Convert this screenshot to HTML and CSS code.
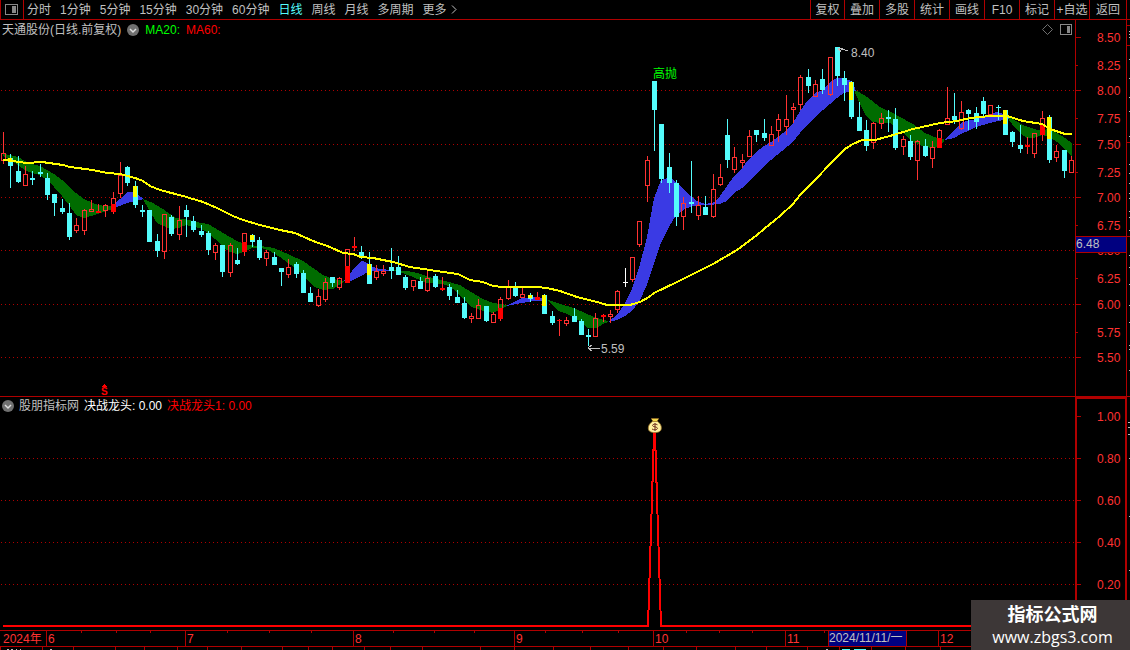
FILE: index.html
```html
<!DOCTYPE html>
<html lang="zh-CN">
<head>
    <meta charset="UTF-8">
    <meta name="viewport" content="width=device-width, initial-scale=1.0">
    <title>天通股份 - 日线</title>
    <link rel="stylesheet" href="styles.css">
</head>
<body>
    <header class="toolbar">
        <button class="layout-button" aria-label="布局">
            <svg width="13" height="11" viewBox="0 0 13 11"><rect x="0.5" y="0.5" width="12" height="10" rx="1" fill="none" stroke="#888"/><rect x="7" y="2" width="4" height="7" fill="#888"/></svg>
        </button>
        <nav class="periods">
            <button>分时</button>
            <button>1分钟</button>
            <button>5分钟</button>
            <button>15分钟</button>
            <button>30分钟</button>
            <button>60分钟</button>
            <button class="active">日线</button>
            <button>周线</button>
            <button>月线</button>
            <button>多周期</button>
            <button class="more">更多
                <svg width="6" height="9" viewBox="0 0 6 9"><path d="M1 0.5L5 4.5L1 8.5" fill="none" stroke="#c0c0c0"/></svg>
            </button>
        </nav>
        <div class="tools">
            <button>复权</button>
            <button>叠加</button>
            <button>多股</button>
            <button>统计</button>
            <button>画线</button>
            <button>F10</button>
            <button>标记</button>
            <button>+自选</button>
            <button>返回</button>
        </div>
    </header>

    <main>
        <section class="panel">
            <div class="plot">
                <div class="panel-title price-title">
                    <span>天通股份(日线.前复权)</span>
                    <button class="toggle" aria-label="展开">
                        <svg width="12" height="12" viewBox="0 0 12 12"><circle cx="6" cy="6" r="6" fill="#707070"/><path d="M3 5L6 8L9 5" fill="none" stroke="#ddd" stroke-width="1.5"/></svg>
                    </button>
                    <span class="ma20">MA20:</span>
                    <span class="ma60">MA60:</span>
                    <span class="title-icons">
                        <svg width="11" height="11" viewBox="0 0 11 11"><path d="M5.5 0.5L10.5 5.5L5.5 10.5L0.5 5.5Z" fill="none" stroke="#707070"/></svg>
                        <svg width="12" height="11" viewBox="0 0 12 11"><rect x="0.5" y="0.5" width="11" height="10" rx="1" fill="none" stroke="#888"/><rect x="7" y="2" width="3" height="7" fill="#888"/></svg>
                    </span>
                </div>
                <svg class="chart" viewBox="0 39 1075 357">
                    <g id="priceGrid"></g>
                    <g class="band-down">
                        <polygon points="3,154 10,155 18,157 25,161 32,164 40,166 47,170 54,174 62,180 69,187 76,193 84,199 91,202 98,205 106,206 115,206 115,208 106,211 98,214 91,216 84,218 76,215 69,205 62,196 54,187 47,180 40,175 32,173 25,170 18,165 10,160 3,156"/>
                        <polygon points="143,199 153,203 163,209 170,214 176,218 183,219 193,221 201,223 208,224 215,228 223,233 230,237 237,241 247,245 260,246 274,248 288,254 303,261 313,268 323,275 333,279 344,281 342,283 333,289 323,290 315,287 307,280 298,270 288,263 280,257 270,251 261,248 252,248 244,252 237,254 230,252 223,247 215,239 208,233 200,228 193,227 186,225 179,228 171,229 157,223 149,210"/>
                        <polygon points="391,270 407,271 417,273 433,278 449,282 460,285 471,292 483,299 493,303 507,305 507,306 500,310 493,313 480,310 471,307 464,300 457,292 449,286 442,284 427,283 413,277 400,272"/>
                        <polygon points="546,299 560,304 574,308 587,314 600,319 608,321 608,322 603,324 597,328 588,328 581,322 574,317 567,314 559,311 552,305"/>
                        <polygon points="854,90 859,92 867,97 880,107 895,114 900,117 913,124 925,133 937,138 944,139 944,141 939,147 932,148 925,147 913,142 903,133 895,127 890,123 881,123 873,122 866,116 859,102"/>
                        <polygon points="1007,117 1013,119 1023,125 1037,130 1042,130 1050,129 1057,133 1065,138 1072,143 1072,156 1063,148 1057,142 1049,137 1042,135 1034,138 1027,138 1020,133 1012,124"/>
                    </g>
                    <g class="band-up">
                        <polygon points="113,205 120,199 127,192 131,192 137,194 144,199 135,201 127,203 120,206 113,208"/>
                        <polygon points="343,281 350,274 355,267 361,261 363,261 367,263 373,267 380,269 391,270 391,271 370,271 361,276 353,280 347,282"/>
                        <polygon points="506,306 522,298 533,297 543,298 548,300 543,301 533,301 522,303"/>
                        <polygon points="608,322 617,315 625,303 632,289 639,268 647,237 654,198 661,180 667,178 672,179 677,183 687,193 697,201 705,204 715,202 720,196 727,186 734,176 742,168 749,159 756,152 764,146 771,142 783,133 793,123 800,111 808,100 815,93 823,90 830,82 837,78 844,78 853,82 856,91 851,91 844,93 837,98 830,104 815,117 800,133 793,142 771,160 753,177 742,188 734,193 727,201 720,204 707,205 693,206 685,209 676,215 669,227 661,243 654,263 647,285 639,302 632,311 625,316 617,320"/>
                        <polygon points="944,140 954,130 963,122 980,118 990,114 997,112 1006,115 1009,119 998,121 990,123 976,127 968,131 961,134 954,138"/>
                    </g>
                    <g id="candles"></g>
                    <polyline class="ma60-line" points="3,160 12,161 27,163 42,162 63,165 70,167 93,170 107,173 120,174 135,178 143,181 150,186 160,190 183,196 203,202 217,208 233,216 243,220 260,225 280,230 295,233 313,241 330,247 343,253 353,254 361,257 373,258 393,262 410,267 430,270 443,272 458,274 470,280 483,282 493,286 503,287 537,287 547,288 560,291 577,297 597,302 607,305 630,305 640,302 649,297 654,293 677,282 703,269 713,264 737,250 757,235 764,229 780,216 793,204 800,195 813,182 833,161 845,149 853,144 862,140 875,140 890,136 913,129 940,123 957,121 970,118 990,116 1007,116 1023,121 1042,124 1050,129 1065,134 1072,134"/>
                    <path class="pointer" d="M838 48L848 51M838 48H843M838 48L841 52"/>
                    <text class="note" x="851" y="57">8.40</text>
                    <path class="pointer" d="M588 348H600M588 348L592 345M588 348L592 351"/>
                    <text class="note" x="601" y="353">5.59</text>
                    <text class="signal" x="653" y="78">高抛</text>
                    <path d="M101 387L104.500 384L108 387Z" fill="#f00"/>
                    <text class="dollar" x="101" y="395">S</text>
                </svg>
            </div>
            <svg class="axis" viewBox="1075 20 55 376">
                <path class="axis-line" d="M1075.500 20V396M1126.500 20V396"/>
                <g id="priceAxis"></g>
                <rect x="1076" y="236" width="50" height="16" fill="#000080"/>
                <path class="axis-line" d="M1076 236.500H1130M1076 252.500H1126M1127 25.500H1130M1127 45.500H1130M1127 142.500H1130"/>
                <text class="cursor-value" x="1076" y="248">6.48</text>
                <g id="edgeMarks"></g>
            </svg>
        </section>

        <section class="panel">
            <div class="plot">
                <div class="panel-title signal-title">
                    <button class="toggle" aria-label="展开">
                        <svg width="12" height="12" viewBox="0 0 12 12"><circle cx="6" cy="6" r="6" fill="#707070"/><path d="M3 5L6 8L9 5" fill="none" stroke="#ddd" stroke-width="1.5"/></svg>
                    </button>
                    <span>股朋指标网</span>
                    <span class="value-white">决战龙头: 0.00</span>
                    <span class="value-red">决战龙头1: 0.00</span>
                </div>
                <svg class="chart" viewBox="0 415 1075 215">
                    <g id="signalGrid"></g>
                    <polyline class="spike" points="3,626 648,626 654.500,418 661,626 1075,626"/>
                    <!-- money bag -->
                    <path d="M651 418H659L657 422H653Z" fill="#f4d84c" stroke="#70501c" stroke-width="0.800"/>
                    <path class="bag" d="M652.500 421.500H657.500C660 423 661.500 425.500 661.300 428C661.300 431.500 658.500 432.600 655 432.600C651 432.600 648.300 431.500 648.300 428C648.300 425.500 650 423 652.500 421.500Z" fill="#fff0a0" stroke="#a07828" stroke-width="0.800"/>
                    <path class="bag" d="M657.500 424.800C656 423.700 652.500 423.900 652.500 425.500C652.500 427.300 657.500 426.300 657.500 428.400C657.500 430 653.500 430.200 652 429M655 423V431" fill="none" stroke="#703020"/>
                </svg>
            </div>
            <svg class="axis" viewBox="1075 397 55 233">
                <path class="axis-line thick" d="M1076 398H1126V630M1076 397V630"/>
                <g id="signalAxis"></g>
                <path d="M1128 422.500H1130M1128 427.500H1130M1128 434.500H1130M1129 458.500H1130M1129 516.500H1130M1129 570.500H1130" stroke="#bbb"/>
            </svg>
        </section>

        <svg class="time-axis" viewBox="0 630 1130 20">
            <path class="axis-line" d="M0 630.500H1130M0 646.500H1130"/>
            <rect x="829" y="631" width="77" height="15" fill="#000080"/>
            <path class="axis-line" d="M828.500 631V646M906.500 631V646"/>
            <g id="timeAxis"></g>
            <text class="cursor-value" x="829" y="642">2024/11/11/一</text>
            <path d="M7 649.500H9M11 649.500H13M16 649.500H17M20 649.500H21M50 649.500H52M826 649.500H828" stroke="#bbb"/>
            <path d="M842 649.500H850M854 649.500H866" stroke="#54fcfc"/>
        </svg>
    </main>

    <aside class="watermark">
        <strong>指标公式网</strong>
        <span>www.zbgs3.com</span>
    </aside>

    <script src="chart.js"></script>
</body>
</html>
```

FILE: styles.css
```css
:root {
    --bg: #000;
    --line: #b00000;
    --text: #c0c0c0;
    --red: #ff3232;
    --cyan: #54fcfc;
    --up: #3a3ae4;
    --down: #006c00;
}

* {
    box-sizing: border-box;
}
body {
    margin: 0;
    background-color: var(--bg);
    color: var(--text);
    font-family: "Liberation Sans", "Noto Sans CJK SC", sans-serif;
    font-size: 12px;
    line-height: 18px;
    overflow: hidden;
}
button {
    padding: 0;
    border: none;
    background: none;
    color: inherit;
    font: inherit;
    white-space: nowrap;
    cursor: pointer;
}
svg {
    display: block;
}

/* toolbar */
.toolbar {
    display: flex;
    height: 20px;
    padding-right: 3px;
    border-bottom: 1px solid var(--line);
}
.layout-button {
    width: 24px;
    padding-left: 4px;
    border-left: 1px solid var(--line);
    border-right: 1px solid var(--line);
}
.periods {
    display: flex;
    flex: 1;
    gap: 9px;
    padding-left: 3px;
}
.periods .active {
    color: var(--cyan);
}
.more {
    display: flex;
    align-items: center;
    gap: 4px;
}
.tools {
    display: flex;
    border-right: 1px solid var(--line);
}
.tools button {
    width: 35px;
    border-left: 1px solid var(--line);
}
.tools button:first-child {
    width: 34px;
}
.tools button:last-child {
    width: 37px;
}

/* chart panels */
.panel {
    display: grid;
    grid-template-columns: 1075fr 55fr;
}
.panel:first-child {
    border-bottom: 1px solid var(--line);
}
.plot {
    min-width: 0;
}
.chart, .axis, .time-axis {
    width: 100%;
    height: auto;
}
.panel-title {
    display: flex;
    align-items: center;
    gap: 5px;
    padding-left: 2px;
}
.price-title {
    gap: 6px;
    height: 19px;
}
.signal-title {
    height: 18px;
}
.toggle {
    width: 12px;
    height: 12px;
}
.ma20 {
    color: #00ff00;
}
.ma60 {
    color: #ff0000;
}
.title-icons {
    display: flex;
    gap: 7px;
    margin-left: auto;
    padding-right: 3px;
}
.value-white {
    color: #fff;
}
.value-red {
    color: #ff0000;
}

/* drawing */
svg path, svg polygon, svg rect, svg line, .chart polyline {
    shape-rendering: crispEdges;
}
button path, button circle, .title-icons path, svg .bag {
    shape-rendering: auto;
}
svg text {
    font-size: 12px;
}
.grid-line {
    stroke: #b00000;
    stroke-dasharray: 1 3;
}
.axis-line {
    fill: none;
    stroke: var(--line);
}
.thick {
    stroke-width: 2;
}
.axis-text {
    fill: var(--red);
}
.cursor-value, .note {
    fill: var(--text);
}
.band-down {
    fill: var(--down);
}
.band-up {
    fill: var(--up);
}
.ma60-line {
    fill: none;
    stroke: #ffff00;
    stroke-width: 2;
}
.pointer {
    fill: none;
    stroke: var(--text);
}
.signal {
    fill: #00ff00;
}
.dollar {
    fill: #ff0000;
    font-weight: bold;
    font-size: 10px;
}
.spike {
    fill: none;
    stroke: #ff0000;
    stroke-width: 2;
}
.candle-up {
    fill: none;
    stroke: var(--red);
}
.candle-down {
    fill: var(--cyan);
    stroke: none;
}
.wick-up {
    stroke: var(--red);
}
.wick-down {
    stroke: var(--cyan);
}
.wick-flat {
    stroke: #fff;
}
.candle-flat {
    fill: #fff;
}
.candle-red {
    fill: #ff0000;
}
.candle-yellow {
    fill: #ffff00;
}

.watermark {
    position: absolute;
    right: 0;
    bottom: 0;
    display: flex;
    flex-direction: column;
    align-items: center;
    width: 159px;
    height: 50px;
    padding: 1px 0 0 4px;
    background-color: #3d3737;
    color: #fff;
    font-family: "Open Sans", "Noto Sans CJK SC", sans-serif;
    font-size: 16px;
    line-height: 22px;
}
.watermark strong {
    font-family: "Noto Sans CJK SC", sans-serif;
    font-size: 18px;
    line-height: 25px;
}
```

FILE: chart.js
```js
// kind, high, body top, body bottom, low, highlight top, highlight bottom
// u = up, d = down, s = small solid up, f = flat
const candles = [
    ['u',132,153,161,164], ['d',154,158,166,188,158,162], ['d',156,171,182,183], ['u',166,174,186,186],
    ['d',171,178,180,185], ['d',164,172,174,177], ['d',173,178,195,200], ['d',194,194,203,216],
    ['d',199,208,212,214], ['d',203,213,237,240], ['u',218,225,231,233], ['u',209,210,231,235],
    ['u',200,209,212,212], ['s',204,211,213,213], ['u',204,205,211,217], ['u',192,198,212,214,204,212],
    ['u',162,175,194,198], ['d',166,167,183,186], ['d',181,186,205,208,186,197], ['d',205,210,212,217],
    ['d',210,210,242,242], ['d',234,241,251,257], ['u',214,214,252,259], ['d',215,217,234,236],
    ['u',206,220,235,240], ['d',205,210,217,237], ['d',216,221,230,232], ['d',225,231,235,237],
    ['d',231,233,250,255], ['u',243,245,253,260], ['d',245,245,272,277], ['u',243,245,273,277],
    ['d',248,260,264,265], ['u',233,233,252,256,242,252], ['d',234,235,242,247,235,240], ['d',237,240,258,260],
    ['u',250,252,259,266], ['d',252,257,265,265], ['d',268,268,272,286], ['u',259,267,275,278],
    ['d',262,264,274,278], ['d',270,273,293,293], ['d',287,293,302,302], ['u',289,296,306,307],
    ['u',278,282,300,302], ['d',277,277,283,287], ['u',277,278,288,290], ['u',249,249,283,283,266,283],
    ['s',237,246,248,251], ['d',246,252,257,259], ['d',252,264,284,284,264,275], ['u',265,271,278,280],
    ['u',265,271,274,276], ['d',248,267,271,279], ['d',256,267,275,275], ['d',275,277,288,290],
    ['u',280,280,287,291], ['d',277,281,289,289], ['u',270,278,291,292], ['d',274,276,287,288],
    ['s',277,288,290,291], ['d',284,287,296,300], ['d',290,297,303,303], ['d',297,303,318,319],
    ['u',313,316,319,323], ['u',299,305,319,319], ['d',306,306,321,322], ['u',312,314,323,323],
    ['u',297,299,319,321,308,319], ['u',280,287,299,300], ['d',282,287,296,297], ['u',288,294,298,298],
    ['d',293,295,299,302,295,298], ['s',292,297,300,300], ['d',294,295,314,314,295,306], ['d',311,316,323,325],
    ['s',319,320,321,336], ['u',317,320,324,326], ['d',308,316,322,322], ['d',319,321,335,335],
    ['d',329,335,337,346], ['u',313,318,337,337], ['s',314,315,317,322], ['u',310,314,317,323],
    ['u',290,291,310,313], ['f',268,282,283,287], ['u',257,257,280,282], ['u',221,221,245,247],
    ['u',156,160,186,202], ['d',81,81,110,151], ['d',124,124,179,183], ['d',153,167,183,193],
    ['d',180,183,217,226], ['u',197,203,217,230], ['d',161,202,204,213], ['u',196,205,216,220],
    ['d',196,207,215,215], ['u',174,189,217,218], ['u',164,177,185,186], ['d',119,135,160,168],
    ['u',147,157,170,173], ['u',154,160,163,168], ['u',130,136,157,157], ['d',130,130,135,142],
    ['d',119,133,138,141], ['u',126,134,146,146], ['u',114,119,131,142], ['u',95,119,127,135],
    ['u',103,107,110,123], ['u',75,77,105,110], ['d',69,77,86,93], ['u',80,84,97,97],
    ['d',69,79,90,94], ['u',57,57,95,96], ['d',47,47,76,86], ['d',71,78,85,101],
    ['d',81,82,117,119,82,100], ['d',102,117,131,131], ['d',120,130,146,151], ['u',122,123,143,149],
    ['u',113,118,124,129], ['d',110,117,119,132], ['d',108,119,148,150], ['u',136,139,147,155],
    ['d',135,141,157,160], ['u',140,141,161,180], ['d',139,146,156,157], ['u',141,147,159,168],
    ['u',129,130,148,148,138,148], ['u',87,118,125,125], ['d',93,116,120,124], ['u',101,112,129,130],
    ['d',109,110,114,130], ['d',107,113,122,129], ['d',97,101,114,116], ['u',105,105,115,116],
    ['d',105,107,108,120], ['d',110,110,135,135,110,124], ['d',131,132,142,147], ['d',125,145,149,153],
    ['s',137,145,147,154], ['u',133,133,154,158], ['u',111,118,135,141,125,135], ['d',115,117,160,163,117,139],
    ['u',145,151,158,162], ['d',150,150,171,178], ['u',156,160,173,173]
];

const line = (cls, x1, y1, x2, y2) =>
    `<line class="${cls}" x1="${x1}" y1="${y1}" x2="${x2}" y2="${y2}"/>`;
const label = (x, y, text) => `<text class="axis-text" x="${x}" y="${y}">${text}</text>`;

function fill(id, html) {
    document.getElementById(id).innerHTML = html;
}

function drawCandle([kind, high, top, bottom, low, markTop, markBottom], i) {
    const x = Math.floor(3.55 + i * 7.314);
    const name = { u: 'up', s: 'up', d: 'down', f: 'flat' }[kind];
    let out = '';
    if (high < top) out += line('wick-' + name, x + 0.5, high, x + 0.5, top);
    if (low > bottom) out += line('wick-' + name, x + 0.5, bottom, x + 0.5, low);
    if (kind === 'u') {
        out += `<rect class="candle-up" x="${x - 1.5}" y="${top + 0.5}" width="4" height="${bottom - top - 1}"/>`;
    } else {
        const cls = kind === 's' ? 'candle-red' : 'candle-' + name;
        out += `<rect class="${cls}" x="${x - 2}" y="${top}" width="5" height="${bottom - top}"/>`;
    }
    if (markTop) {
        const cls = kind === 'u' ? 'candle-red' : 'candle-yellow';
        // yellow marks leave the last column of the body uncovered
        const w = kind === 'u' ? 5 : 4;
        out += `<rect class="${cls}" x="${x - 2}" y="${markTop}" width="${w}" height="${markBottom - markTop}"/>`;
    }
    return out;
}

fill('candles', candles.map(drawCandle).join(''));
fill('priceGrid', [90, 144, 197, 250, 304, 357].map(y => line('grid-line', 1, y + 0.5, 1075, y + 0.5)).join(''));
fill('signalGrid', [458, 500, 542, 584].map(y => line('grid-line', 1, y + 0.5, 1075, y + 0.5)).join(''));

const prices = [
    [37, '8.50'], [65, '8.25'], [90, '8.00'], [118, '7.75'], [144, '7.50'], [172, '7.25'], [197, '7.00'],
    [225, '6.75'], [250, '6.50'], [278, '6.25'], [304, '6.00'], [332, '5.75'], [357, '5.50']
];
fill('priceAxis', prices.map(([y, text], i) =>
    line('axis-line', 1076, y + 0.5, i % 2 ? 1078 : 1081, y + 0.5) + label(1097, y + 5, text)).join(''));

const levels = [[416, '1.00'], [458, '0.80'], [500, '0.60'], [542, '0.40'], [584, '0.20']];
fill('signalAxis', levels.map(([y, text]) =>
    line('axis-line', 1077, y + 0.5, 1081, y + 0.5) + label(1097, y + 5, text)).join(''));

const marks = [31, 34, 37, 59, 78, 97, 111, 136, 164, 173, 183, 193, 198, 211, 217, 230, 255, 267, 284, 305, 322, 345, 349, 370];
fill('edgeMarks', marks.map(y => `<rect x="1129" y="${y}" width="1" height="1" fill="#bbb"/>`).join(''));

const months = [[46, 6], [185, 7], [353, 8], [514, 9], [653, 10], [785, 11], [938, 12]];
const weeks = [81, 116, 150, 227, 269, 311, 393, 434, 474, 545, 582, 618, 686, 719, 752, 824];
const lower = [0, 42, 73, 115, 144, 177, 207, 241, 282, 308, 332, 364, 390, 422, 480, 514, 553, 590, 628, 663, 696, 735, 766, 807, 839, 871, 905, 940];
fill('timeAxis',
    label(3, 643, '2024年') +
    months.map(([x, text]) => line('axis-line', x + 0.5, 631, x + 0.5, 646) + label(x + 2, 643, text)).join('') +
    weeks.map(x => line('axis-line', x + 0.5, 631, x + 0.5, 633)).join('') +
    lower.map(x => line('axis-line', x + 0.5, 647, x + 0.5, 650)).join(''));
```
